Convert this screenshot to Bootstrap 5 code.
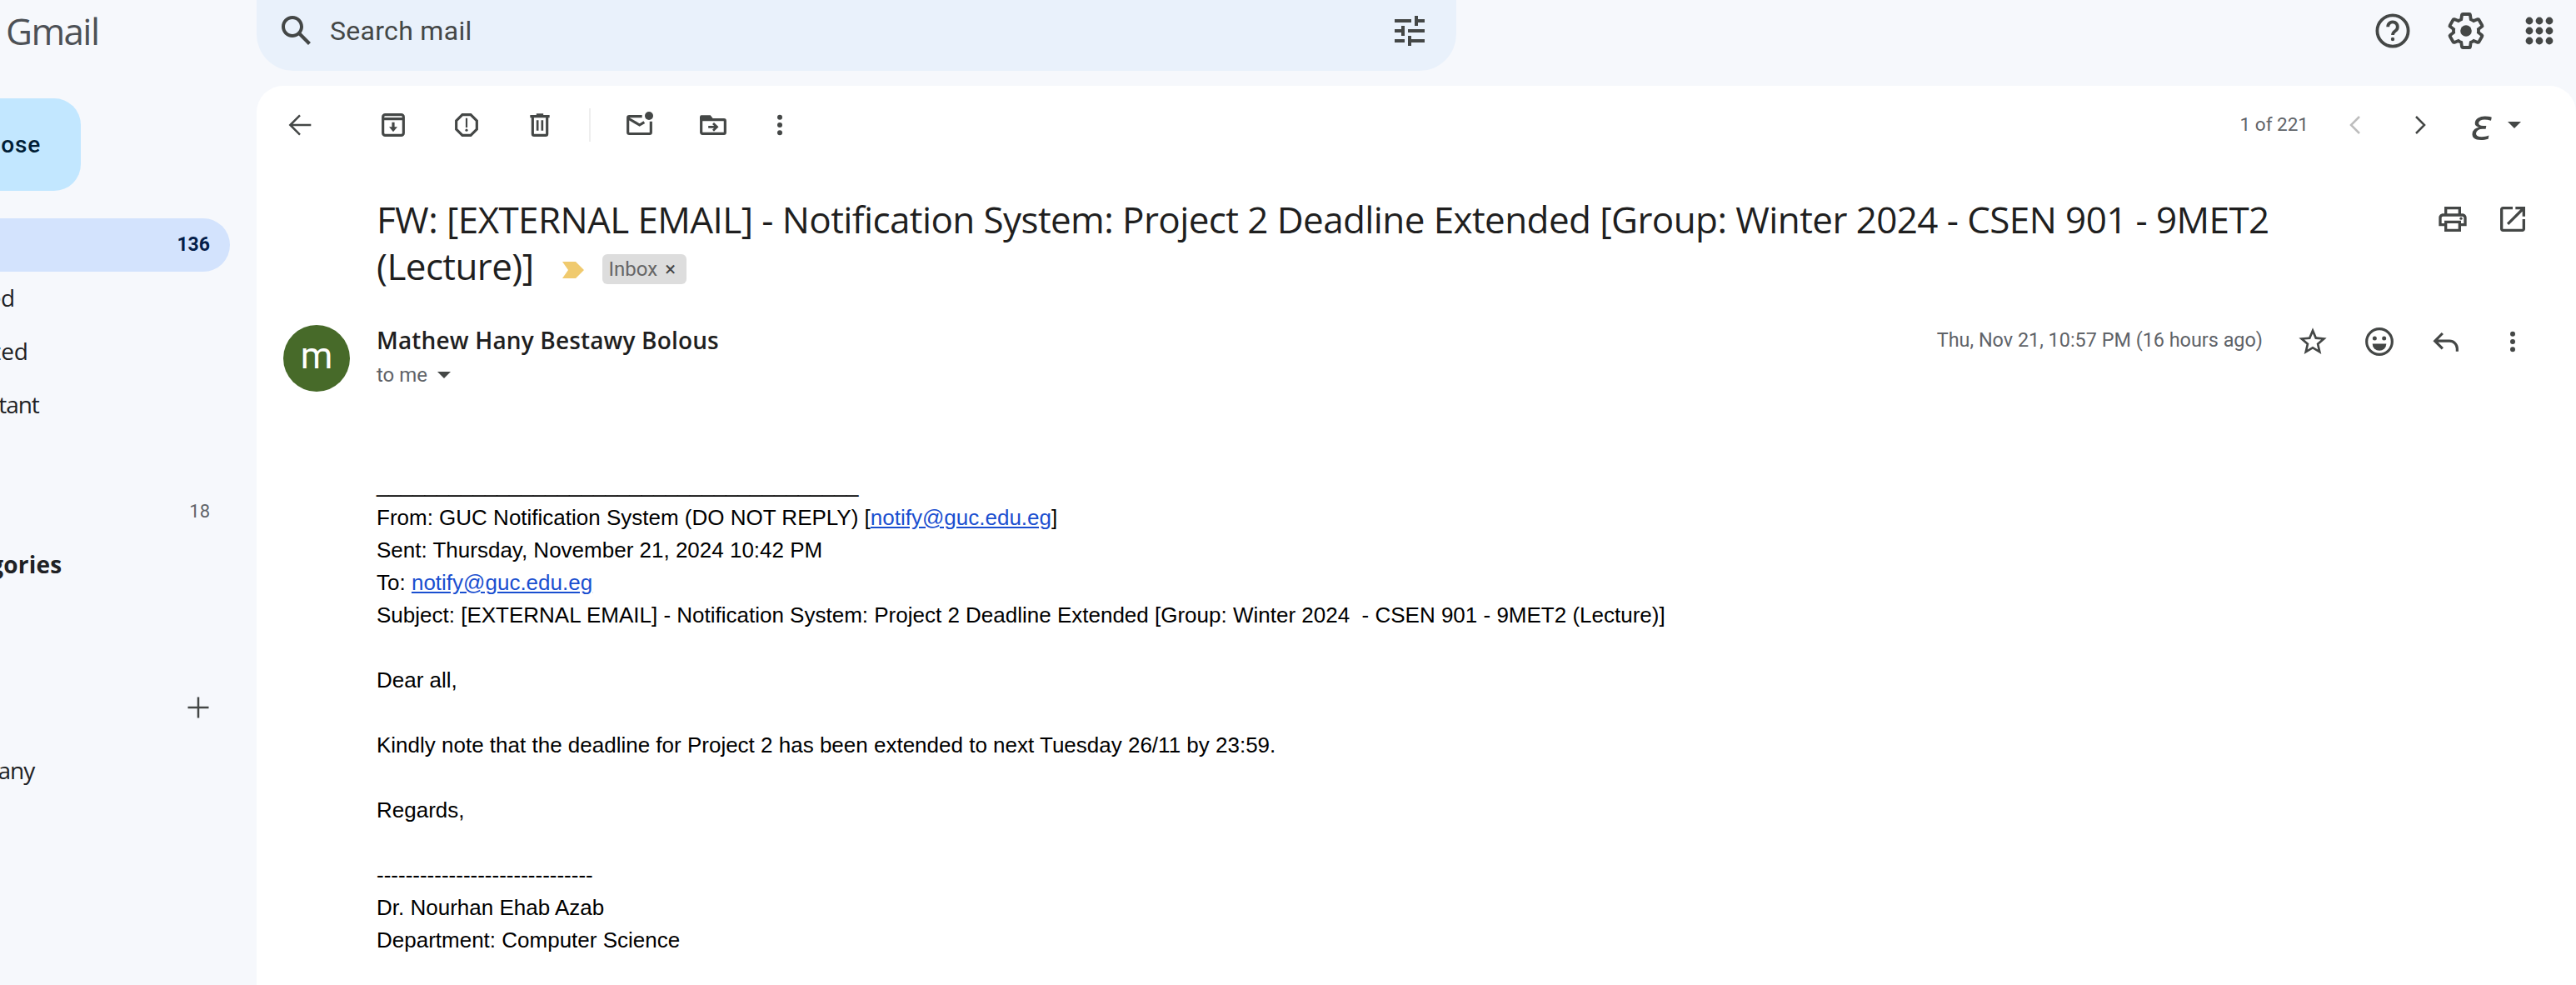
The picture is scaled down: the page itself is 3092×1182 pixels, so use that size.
<!DOCTYPE html>
<html lang="en">
<head>
    <meta charset="UTF-8">
    <title>Gmail</title>
    <link href="https://cdn.jsdelivr.net/npm/bootstrap@5.3.0/dist/css/bootstrap.min.css" rel="stylesheet">
    <style>
        html, body { height: 1182px; overflow: hidden; }
        body { background: #f6f8fc; font-family: Roboto, "Noto Sans", sans-serif; color: #1f1f1f; }
        svg { display: block; flex: none; }
        .ic { fill: none; stroke: #444746; stroke-width: 1.9; }
        .ic.thin { stroke-width: 1.5; }
        .fl { fill: #444746; stroke: none; }

        .topbar { height: 103px; }
        .brand-area { width: 308px; padding-left: 7px; padding-bottom: 29px; font-size: 44px; color: #4d5156; font-family: "Open Sans", sans-serif; letter-spacing: -1.6px; }
        .searchbox { width: 1440px; height: 85px; align-self: flex-start; background: #e9f1fb; border-radius: 0 0 44px 44px; padding: 0 32px 11px 24px; margin-right: auto; color: #444746; font-size: 32px; letter-spacing: .3px; }
        .searchbox .hint { margin-left: 16px; margin-right: auto; }
        .head-icons { gap: 40px; padding-right: 20px; padding-bottom: 29px; }

        .sidebar { width: 308px; height: 1079px; flex: none; overflow: hidden; }
        .side-in { width: 436px; margin-left: -160px; }
        .compose-btn { height: 111px; margin: 15px 0 33px; width: 257px; background: #c2e7ff; border-radius: 32px; justify-content: flex-end; padding-right: 48px; font-size: 28px; font-weight: 500; letter-spacing: .8px; color: #001d35; }
        .side-row { height: 64px; padding: 0 24px 2px 84px; font-size: 28px; color: #202124; font-family: "Open Sans", sans-serif; letter-spacing: -.4px; }
        .side-row.on { background: #d3e3fd; border-radius: 0 32px 32px 0; font-weight: 700; color: #041e49; padding-bottom: 0; }
        .side-row .num { margin-left: auto; font-size: 22px; font-family: Roboto, sans-serif; letter-spacing: 0; color: #5f6368; }
        .side-row.on .num { font-size: 23px; color: #041e49; }
        .side-row.head { font-weight: 700; letter-spacing: .2px; }
        .side-row.tight { letter-spacing: -1px; }
        .side-row.tighter { letter-spacing: -2px; }
        .side-row .add { margin-left: auto; margin-right: -6px; }
        .gap-row { height: 108px; }
        .after-labels { margin-top: 11px; }

        .mailpane { flex: 1; height: 1079px; background: #fff; border-radius: 32px 32px 0 0; overflow: hidden; }
        .tools { height: 94px; padding: 0 0 0 32px; }
        .tool-sep { width: 2px; height: 40px; background: #eee; margin: 0 39px; }
        .pager { font-size: 22.5px; color: #5f6368; margin-left: auto; padding-right: 62px; }
        .pager .count { margin-right: 36px; }
        .lang-glyph { font-size: 50px; line-height: 40px; font-style: italic; color: #444746; font-family: "DejaVu Sans", sans-serif; width: 30px; text-align: center; margin-left: 39px; margin-right: 4px; }

        .subject-row { margin-top: 38px; padding-left: 144px; padding-right: 56px; }
        .subject { width: 2340px; font-size: 44px; line-height: 56px; font-family: "Open Sans", sans-serif; letter-spacing: -.59px; color: #1f1f1f; }
        .marker { display: inline-block; vertical-align: 2px; margin: 0 22px 0 34px; }
        .chip-inbox { display: inline-block; vertical-align: 5px; height: 36px; line-height: 36px; width: 101px; padding-left: 8px; background: #ddd; border-radius: 6px; font-size: 24px; color: #666; font-family: Roboto, sans-serif; letter-spacing: 0; }
        .chip-inbox b { font-weight: 400; color: #444; margin-left: 9px; }

        .sender { margin-top: 43px; padding-left: 32px; padding-right: 56px; }
        .avatar-m { width: 80px; height: 80px; border-radius: 50%; background: #476a29; color: #fff; font-size: 44px; line-height: 74px; text-align: center; margin-right: 32px; flex: none; }
        .from-name { font-family: "Open Sans", sans-serif; font-size: 28px; font-weight: 600; line-height: 36px; letter-spacing: .15px; color: #1f1f1f; }
        .to-me { font-size: 24px; line-height: 32px; margin-top: 8px; color: #5f6368; }
        .sent-at { font-size: 23.4px; line-height: 36px; color: #5f6368; margin-right: 40px; }
        .mail-acts { gap: 40px; height: 40px; }

        .mail-text { margin-top: 93px; padding-left: 144px; font-family: "Liberation Sans", Arial, sans-serif; font-size: 26px; line-height: 39px; color: #000; white-space: pre; }
        .mail-text a { color: #1a4fd0; }
    </style>
</head>
<body>
    <div class="topbar d-flex align-items-center">
        <div class="brand-area">Gmail</div>
        <div class="searchbox d-flex align-items-center">
            <svg width="48" height="48" viewBox="0 0 24 24"><path class="fl" d="M20.49 19l-5.73-5.73C15.53 12.2 16 10.91 16 9.5 16 5.91 13.09 3 9.5 3S3 5.91 3 9.5 5.91 16 9.5 16c1.41 0 2.7-.47 3.77-1.24L19 20.49 20.49 19zM5 9.5C5 7.01 7.01 5 9.5 5S14 7.01 14 9.5 11.99 14 9.5 14 5 11.99 5 9.5z"/></svg>
            <span class="hint">Search mail</span>
            <svg width="48" height="48" viewBox="0 0 48 48"><path class="fl" d="M6 10h20v4H6zM30 6h4v12h-4zM34 10h8v4h-8zM6 22h12v4H6zM14 18h4v12h-4zM22 22h20v4H22zM6 34h12v4H6zM22 30h4v12h-4zM26 34h16v4H26z"/></svg>
        </div>
        <div class="head-icons d-flex align-items-center">
            <svg width="48" height="48" viewBox="0 0 24 24"><circle class="ic" cx="12" cy="12" r="9.3"/><path class="ic" d="M9.1 9.6a2.9 2.9 0 1 1 4.5 2.4c-1 .7-1.6 1.2-1.6 2.5"/><circle class="fl" cx="12" cy="17" r="1.1"/></svg>
            <svg width="48" height="48" viewBox="0 0 24 24"><path class="ic" d="M19.43 12.98c.04-.32.07-.64.07-.98 0-.34-.03-.66-.07-.98l2.11-1.65c.19-.15.24-.42.12-.64l-2-3.46c-.09-.16-.26-.25-.44-.25-.06 0-.12.01-.17.03l-2.49 1c-.52-.4-1.08-.73-1.69-.98l-.38-2.65C14.46 2.18 14.25 2 14 2h-4c-.25 0-.46.18-.49.42l-.38 2.65c-.61.25-1.17.59-1.69.98l-2.49-1c-.06-.02-.12-.03-.18-.03-.17 0-.34.09-.43.25l-2 3.46c-.13.22-.07.49.12.64l2.11 1.65c-.04.32-.07.65-.07.98 0 .33.03.66.07.98l-2.11 1.65c-.19.15-.24.42-.12.64l2 3.46c.09.16.26.25.44.25.06 0 .12-.01.17-.03l2.49-1c.52.4 1.08.73 1.69.98l.38 2.65c.03.24.24.42.49.42h4c.25 0 .46-.18.49-.42l.38-2.65c.61-.25 1.17-.59 1.69-.98l2.49 1c.06.02.12.03.18.03.17 0 .34-.09.43-.25l2-3.46c.12-.22.07-.49-.12-.64l-2.11-1.65z"/><circle class="fl" cx="12" cy="12" r="3.4"/></svg>
            <svg width="48" height="48" viewBox="0 0 24 24"><g class="fl"><circle cx="6" cy="6" r="2.2"/><circle cx="12" cy="6" r="2.2"/><circle cx="18" cy="6" r="2.2"/><circle cx="6" cy="12" r="2.2"/><circle cx="12" cy="12" r="2.2"/><circle cx="18" cy="12" r="2.2"/><circle cx="6" cy="18" r="2.2"/><circle cx="12" cy="18" r="2.2"/><circle cx="18" cy="18" r="2.2"/></g></svg>
        </div>
    </div>

    <div class="d-flex">
        <nav class="sidebar">
            <div class="side-in">
                <div class="compose-btn d-flex align-items-center">Compose</div>
                <div class="side-row on tight d-flex align-items-center">Inbox<span class="num">136</span></div>
                <div class="side-row d-flex align-items-center">Starred</div>
                <div class="side-row d-flex align-items-center">Snoozed</div>
                <div class="side-row tight d-flex align-items-center">Important</div>
                <div class="side-row d-flex align-items-center">Sent</div>
                <div class="side-row tight d-flex align-items-center">Drafts<span class="num">18</span></div>
                <div class="side-row head d-flex align-items-center">Categories</div>
                <div class="gap-row"></div>
                <div class="side-row tighter d-flex align-items-center">Labels
                    <svg class="add" width="40" height="40" viewBox="0 0 24 24"><path class="ic thin" d="M12 4.5v15M4.5 12h15"/></svg>
                </div>
                <div class="side-row tight after-labels d-flex align-items-center">Company</div>
            </div>
        </nav>

        <main class="mailpane">
            <div class="tools d-flex align-items-center">
                <svg width="40" height="40" viewBox="0 0 24 24"><path class="ic thin" d="M20 12H5M12 5l-7 7 7 7"/></svg>
                <div class="d-flex align-items-center" style="margin-left:72px;gap:48px">
                    <svg width="40" height="40" viewBox="0 0 24 24"><rect class="ic" x="4.6" y="4.6" width="14.8" height="14.8" rx="1.6"/><path class="ic" d="M4.6 7.6h14.8M12 10v5"/><path class="fl" d="M9 13.4h6L12 17z"/></svg>
                    <svg width="40" height="40" viewBox="0 0 24 24"><path class="ic" d="M9 4.6h6L19.4 9v6L15 19.4H9L4.6 15V9z"/><path class="ic" style="stroke-width:1.3" d="M12 7v6.8"/><circle class="fl" cx="12" cy="15.7" r=".95"/></svg>
                    <svg width="40" height="40" viewBox="0 0 24 24"><path class="ic" d="M6.8 6v12.4a1 1 0 0 0 1 1h8.4a1 1 0 0 0 1-1V6M5 5.8h14"/><path class="fl" d="M9.5 3.8h5V5h-5z"/><path class="ic" style="stroke-width:1.6" d="M10.3 8.5v7.5M13.7 8.5v7.5"/></svg>
                </div>
                <div class="tool-sep"></div>
                <div class="d-flex align-items-center" style="gap:48px">
                    <svg width="40" height="40" viewBox="0 0 24 24"><path class="ic" d="M13.6 5.8H4.4a1 1 0 0 0-1 1v10.5a1 1 0 0 0 1 1h14.6a1 1 0 0 0 1-1V9.4M3.6 7.2l8.2 4.8 3.4-2"/><circle class="fl" cx="18.6" cy="5.4" r="3"/></svg>
                    <svg width="40" height="40" viewBox="0 0 24 24"><path class="ic" d="M3.4 6v11.4a.8.8 0 0 0 .8.8h15.6a.8.8 0 0 0 .8-.8V9a.8.8 0 0 0-.8-.8H3.4"/><path class="fl" d="M3.4 5h6.6l2.6 3.2H2.5V6a1 1 0 0 1 .9-1z"/><path class="ic" style="stroke-width:1.7" d="M8.5 13.4h6M12 10.8l2.7 2.6-2.7 2.6"/></svg>
                    <svg width="40" height="40" viewBox="0 0 24 24" style="margin-left:-8px"><g class="fl"><circle cx="12" cy="6.5" r="1.8"/><circle cx="12" cy="12" r="1.8"/><circle cx="12" cy="17.5" r="1.8"/></g></svg>
                </div>
                <div class="pager d-flex align-items-center">
                    <span class="count">1 of 221</span>
                    <svg width="40" height="40" viewBox="0 0 24 24"><path class="ic thin" style="stroke:#bdbdbd" d="M15 6l-6 6 6 6"/></svg>
                    <svg width="40" height="40" viewBox="0 0 24 24" style="margin-left:38px"><path class="ic thin" d="M9 6l6 6-6 6"/></svg>
                    <span class="lang-glyph">ε</span>
                    <svg class="ms-2" width="24" height="24" viewBox="0 0 24 24"><path class="fl" d="M4 8h16l-8 8z"/></svg>
                </div>
            </div>

            <div class="subject-row d-flex justify-content-between">
                <h1 class="subject fw-normal m-0">FW: [EXTERNAL EMAIL] - Notification System: Project 2 Deadline Extended [Group: Winter 2024 - CSEN 901 - 9MET2 (Lecture)]<svg class="marker d-inline-block" width="26" height="20" viewBox="0 0 26 20"><path d="M0 0h16l10 10-10 10H0l7-10z" fill="#f0ca6e"/></svg><span class="chip-inbox">Inbox<b>×</b></span></h1>
                <div class="d-flex align-items-center" style="gap:32px;height:56px">
                    <svg width="40" height="40" viewBox="0 0 24 24"><path class="fl" d="M19 8h-1V3H6v5H5c-1.66 0-3 1.34-3 3v6h4v4h12v-4h4v-6c0-1.66-1.34-3-3-3zM8 5h8v3H8V5zm8 12v2H8v-4h8v2zm2-2v-2H6v2H4v-4c0-.55.45-1 1-1h14c.55 0 1 .45 1 1v4h-2z"/><circle class="fl" cx="18" cy="11.5" r="1"/></svg>
                    <svg width="40" height="40" viewBox="0 0 24 24"><path class="fl" d="M19 19H5V5h7V3H5c-1.11 0-2 .9-2 2v14c0 1.1.89 2 2 2h14c1.1 0 2-.9 2-2v-7h-2v7zM14 3v2h3.59l-9.83 9.83 1.41 1.41L19 6.41V10h2V3h-7z"/></svg>
                </div>
            </div>

            <div class="sender d-flex">
                <div class="avatar-m">m</div>
                <div>
                    <div class="from-name">Mathew Hany Bestawy Bolous</div>
                    <div class="to-me d-flex align-items-center">to me<svg class="ms-2" width="24" height="24" viewBox="0 0 24 24"><path class="fl" d="M4 8h16l-8 8z"/></svg></div>
                </div>
                <div class="d-flex align-items-start ms-auto">
                    <span class="sent-at">Thu, Nov 21, 10:57 PM (16 hours ago)</span>
                    <div class="mail-acts d-flex align-items-center">
                        <svg width="40" height="40" viewBox="0 0 24 24"><path class="fl" d="M22 9.24l-7.19-.62L12 2 9.19 8.63 2 9.24l5.46 4.73L5.82 21 12 17.27 18.18 21l-1.63-7.03L22 9.24zM12 15.4l-3.76 2.27 1-4.28-3.32-2.88 4.38-.38L12 6.1l1.71 4.04 4.38.38-3.32 2.88 1 4.28L12 15.4z"/></svg>
                        <svg width="40" height="40" viewBox="0 0 24 24"><circle class="ic" cx="12" cy="12" r="9.2"/><circle class="fl" cx="8.6" cy="9.6" r="1.5"/><circle class="fl" cx="15.4" cy="9.6" r="1.5"/><path class="fl" d="M7 13.5h10a5 5 0 0 1-10 0z"/></svg>
                        <svg width="40" height="40" viewBox="0 0 24 24"><path class="ic" d="M9.5 6L4 11.5 9.5 17M4 11.5h10.5a5.5 5.5 0 0 1 5.5 5.5v2"/></svg>
                        <svg width="40" height="40" viewBox="0 0 24 24"><g class="fl"><circle cx="12" cy="6.5" r="1.8"/><circle cx="12" cy="12" r="1.8"/><circle cx="12" cy="17.5" r="1.8"/></g></svg>
                    </div>
                </div>
            </div>

            <div class="mail-text">________________________________________
From: GUC Notification System (DO NOT REPLY) [<a href="#">notify@guc.edu.eg</a>]
Sent: Thursday, November 21, 2024 10:42 PM
To: <a href="#">notify@guc.edu.eg</a>
Subject: [EXTERNAL EMAIL] - Notification System: Project 2 Deadline Extended [Group: Winter 2024  - CSEN 901 - 9MET2 (Lecture)]

Dear all,

Kindly note that the deadline for Project 2 has been extended to next Tuesday 26/11 by 23:59.

Regards,

------------------------------
Dr. Nourhan Ehab Azab
Department: Computer Science</div>
        </main>
    </div>
</body>
</html>
